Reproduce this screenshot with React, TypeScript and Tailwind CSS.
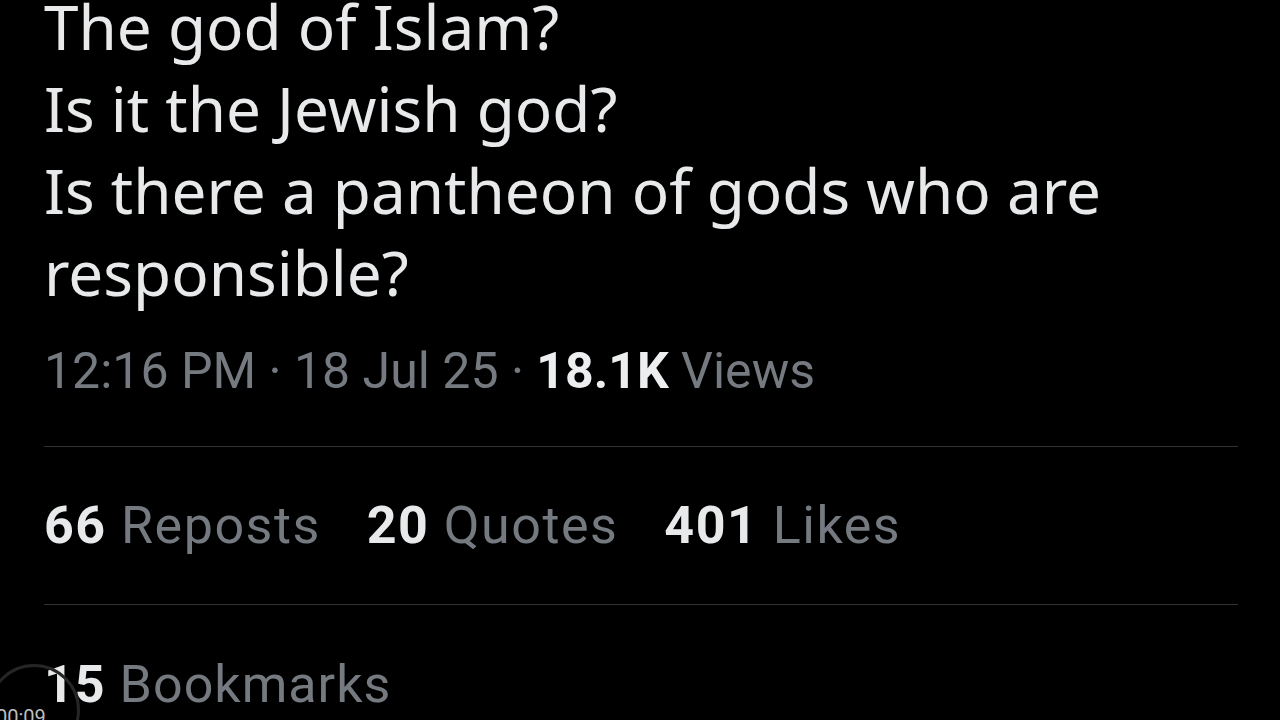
export default function App() {
  return (
    <div className="relative h-[720px] w-[1280px] overflow-hidden bg-black pl-[44px] pr-[42px]">
      <div
        className="-mt-[15px] text-[62px] leading-[82px] text-[#e7e9ea]"
        style={{ fontFamily: '"Noto Sans", sans-serif' }}
      >
        <p>The god of Islam?</p>
        <p>Is it the Jewish god?</p>
        <p>Is there a pantheon of gods who are</p>
        <p>responsible?</p>
      </div>

      <div
        className="mt-[28px] text-[50px] leading-[60px] text-[#747a80]"
        style={{ fontFamily: "Roboto, sans-serif" }}
      >
        12:16 PM · 18 Jul 25 · <span className="font-bold text-[#eceeef]">18.1K</span> Views
      </div>

      <div className="mt-[45px] h-px bg-[#2f3336]" />

      <div
        className="flex h-[157px] items-center gap-[46px] text-[52px] tracking-[1.5px] text-[#747a80]"
        style={{ fontFamily: "Roboto, sans-serif" }}
      >
        <span>
          <span className="font-bold text-[#e7e9ea]">66</span> Reposts
        </span>
        <span>
          <span className="font-bold text-[#e7e9ea]">20</span> Quotes
        </span>
        <span>
          <span className="font-bold text-[#e7e9ea]">401</span> Likes
        </span>
      </div>

      <div className="h-px bg-[#2f3336]" />

      <div
        className="mt-[50px] text-[52px] leading-[60px] tracking-[1px] text-[#747a80]"
        style={{ fontFamily: "Roboto, sans-serif" }}
      >
        <span className="font-bold text-[#e7e9ea]">15</span> Bookmarks
      </div>

      <div className="absolute -left-[12px] top-[664px] h-[92px] w-[92px] rounded-full border-[3px] border-[#262626]" />
      <div
        className="absolute -left-[4px] top-[706px] text-[20px] leading-[22px] text-[#bdbdbd]"
        style={{ fontFamily: "Roboto, sans-serif" }}
      >
        00:09
      </div>
    </div>
  );
}
